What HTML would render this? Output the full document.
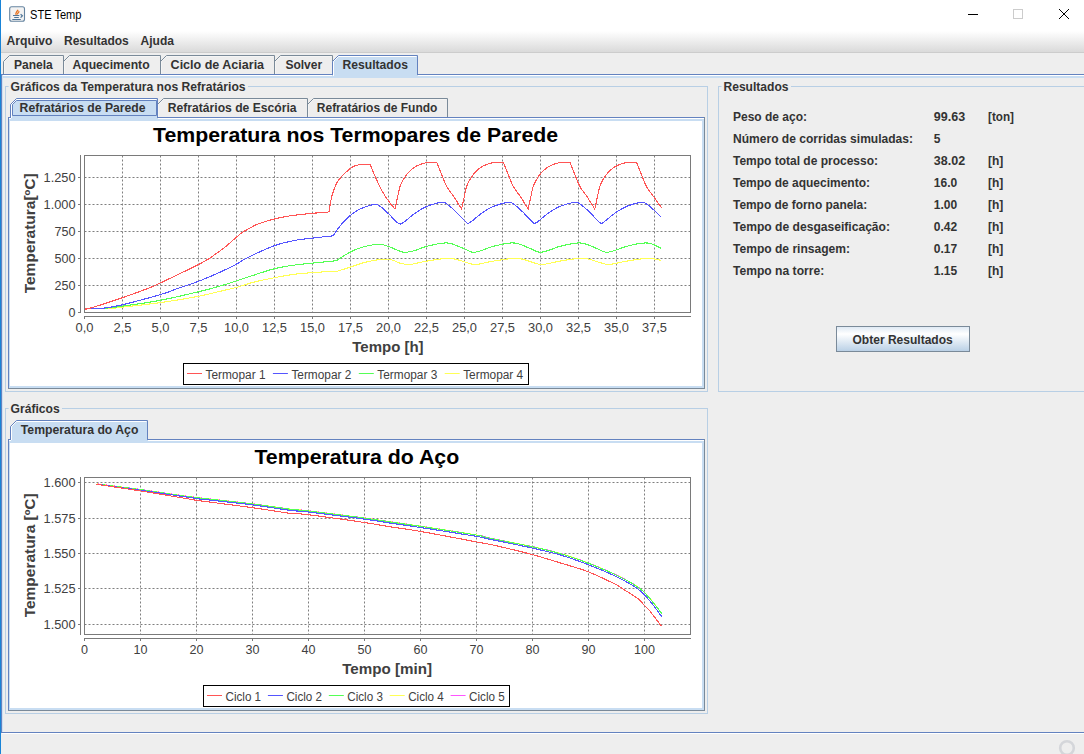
<!DOCTYPE html>
<html><head><meta charset="utf-8"><title>STE Temp</title>
<style>html,body{margin:0;padding:0;width:1084px;height:754px;overflow:hidden;background:#EEEEEE}svg{display:block}text{font-family:"Liberation Sans",sans-serif}</style>
</head><body><svg width="1084" height="754" viewBox="0 0 1084 754" font-family="Liberation Sans, sans-serif" shape-rendering="auto"><rect x="0" y="0" width="1084" height="754" fill="#EEEEEE" />
<rect x="0" y="0" width="1084" height="31" fill="#FFFFFF" />
<defs><linearGradient id="mg" x1="0" y1="0" x2="0" y2="1"><stop offset="0" stop-color="#FFFFFF"/><stop offset="1" stop-color="#DADADA"/></linearGradient><linearGradient id="btg" x1="0" y1="0" x2="0" y2="1"><stop offset="0" stop-color="#DDE8F3"/><stop offset="0.3" stop-color="#FFFFFF"/><stop offset="1" stop-color="#B8CFE5"/></linearGradient></defs>
<rect x="1" y="31" width="1083" height="21" fill="url(#mg)" />
<rect x="1" y="52" width="1083" height="1" fill="#CCCCCC" />
<rect x="9.7" y="6.7" width="14.8" height="14.6" rx="2" fill="#F3F3F3" stroke="#6584A0" stroke-width="1.1"/>
<path d="M13 15.5 h6.3 M14.2 17.5 h4.6 M12.3 19.5 h8.5" stroke="#4F7598" stroke-width="1.1" fill="none"/>
<path d="M20.6 14.3 l1.8 1.6 l-1.8 1.8" stroke="#4F7598" stroke-width="1.2" fill="none"/>
<path d="M16.2 14.8 c-1.2 -1.5 0.3 -3 2 -5 M17.3 14.6 c0 -1.4 1.2 -2 1.9 -3.4" stroke="#E9731F" stroke-width="1.3" fill="none"/>
<text x="30" y="19" font-size="12" fill="#000000" text-anchor="start" textLength="51.5" lengthAdjust="spacingAndGlyphs" >STE Temp</text>
<rect x="968" y="14" width="10" height="1" fill="#000000" />
<rect x="1013.5" y="9.5" width="9" height="9" fill="none" stroke="#CCCCCC"/>
<path d="M1059 9 L1069 19 M1069 9 L1059 19" fill="none" stroke="#000000" stroke-width="1" />
<text x="6.6" y="44.7" font-size="12" font-weight="bold" fill="#333333" text-anchor="start" textLength="45.9" lengthAdjust="spacingAndGlyphs" >Arquivo</text>
<text x="64.0" y="44.7" font-size="12" font-weight="bold" fill="#333333" text-anchor="start" textLength="64.8" lengthAdjust="spacingAndGlyphs" >Resultados</text>
<text x="140.6" y="44.7" font-size="12" font-weight="bold" fill="#333333" text-anchor="start" textLength="33.4" lengthAdjust="spacingAndGlyphs" >Ajuda</text>
<rect x="1" y="74" width="1083" height="1" fill="#6382BF" />
<rect x="2" y="75" width="1082" height="1" fill="#FFFFFF" />
<rect x="2" y="76" width="1082" height="2" fill="#C8DDF2" />
<rect x="1" y="74" width="1" height="659" fill="#6382BF" />
<rect x="2" y="75" width="1" height="657" fill="#CCDFF2" />
<rect x="1" y="732" width="1083" height="1" fill="#6382BF" />
<rect x="2" y="733" width="1082" height="1" fill="#FFFFFF" />
<path d="M4.5 74 V61.5 L9.5 56.5 H62.5" fill="none" stroke="#F5F5F5" stroke-width="1" />
<path d="M3.5 74 V61.5 L9.5 55.5 H63.5 V74" fill="none" stroke="#7A8A99" stroke-width="1" />
<text x="14.0" y="68.6" font-size="12" font-weight="bold" fill="#333333" text-anchor="start" textLength="38.8" lengthAdjust="spacingAndGlyphs" >Panela</text>
<path d="M64.5 74 V61.5 L69.5 56.5 H159.5" fill="none" stroke="#F5F5F5" stroke-width="1" />
<path d="M63.5 74 V61.5 L69.5 55.5 H160.5 V74" fill="none" stroke="#7A8A99" stroke-width="1" />
<text x="72.4" y="68.6" font-size="12" font-weight="bold" fill="#333333" text-anchor="start" textLength="77.2" lengthAdjust="spacingAndGlyphs" >Aquecimento</text>
<path d="M161.5 74 V61.5 L166.5 56.5 H273.5" fill="none" stroke="#F5F5F5" stroke-width="1" />
<path d="M160.5 74 V61.5 L166.5 55.5 H274.5 V74" fill="none" stroke="#7A8A99" stroke-width="1" />
<text x="170.6" y="68.6" font-size="12" font-weight="bold" fill="#333333" text-anchor="start" textLength="93.5" lengthAdjust="spacingAndGlyphs" >Ciclo de Aciaria</text>
<path d="M275.5 74 V61.5 L280.5 56.5 H331.5" fill="none" stroke="#F5F5F5" stroke-width="1" />
<path d="M274.5 74 V61.5 L280.5 55.5 H332.5 V74" fill="none" stroke="#7A8A99" stroke-width="1" />
<text x="285.4" y="68.6" font-size="12" font-weight="bold" fill="#333333" text-anchor="start" textLength="36.8" lengthAdjust="spacingAndGlyphs" >Solver</text>
<rect x="332" y="74" width="86" height="4" fill="#C8DDF2" />
<path d="M332.5 75 V61.5 L338.5 55.5 H417.5 V75 Z" fill="#C8DDF2" stroke="none"/>
<path d="M333.5 75 V61.5 L338.5 56.5 H416.5" fill="none" stroke="#FFFFFF" stroke-width="1" />
<path d="M332.5 75 V61.5 L338.5 55.5 H417.5 V75" fill="none" stroke="#6382BF" stroke-width="1" />
<text x="342.6" y="68.6" font-size="12" font-weight="bold" fill="#333333" text-anchor="start" textLength="65.3" lengthAdjust="spacingAndGlyphs" >Resultados</text>
<rect x="333" y="74" width="1" height="2" fill="#FFFFFF" />
<rect x="5" y="86" width="1" height="306" fill="#B8CFE5" />
<rect x="5" y="391" width="703" height="1" fill="#B8CFE5" />
<rect x="707" y="86" width="1" height="306" fill="#B8CFE5" />
<rect x="5" y="86" width="3.5999999999999996" height="1" fill="#B8CFE5" />
<rect x="248" y="86" width="460" height="1" fill="#B8CFE5" />
<text x="10.6" y="90.9" font-size="12" font-weight="bold" fill="#333333" text-anchor="start" textLength="235" lengthAdjust="spacingAndGlyphs" >Gráficos da Temperatura nos Refratários</text>
<rect x="5" y="408" width="1" height="306" fill="#B8CFE5" />
<rect x="5" y="713" width="703" height="1" fill="#B8CFE5" />
<rect x="707" y="408" width="1" height="306" fill="#B8CFE5" />
<rect x="5" y="408" width="3.5999999999999996" height="1" fill="#B8CFE5" />
<rect x="62" y="408" width="646" height="1" fill="#B8CFE5" />
<text x="10.6" y="412.7" font-size="12" font-weight="bold" fill="#333333" text-anchor="start" textLength="49" lengthAdjust="spacingAndGlyphs" >Gráficos</text>
<rect x="718" y="86" width="1" height="306" fill="#B8CFE5" />
<rect x="718" y="391" width="373" height="1" fill="#B8CFE5" />
<rect x="1090" y="86" width="1" height="306" fill="#B8CFE5" />
<rect x="718" y="86" width="3.5" height="1" fill="#B8CFE5" />
<rect x="791" y="86" width="300" height="1" fill="#B8CFE5" />
<text x="723.5" y="90.8" font-size="12" font-weight="bold" fill="#333333" text-anchor="start" textLength="65.0" lengthAdjust="spacingAndGlyphs" >Resultados</text>
<rect x="9" y="118" width="695" height="270" fill="#C8DDF2" />
<rect x="10" y="121" width="692" height="265" fill="#FFFFFF" />
<rect x="9" y="118" width="695" height="1" fill="#FFFFFF" />
<rect x="8" y="117" width="697" height="1" fill="#6382BF" />
<rect x="8" y="117" width="1" height="272" fill="#6382BF" />
<rect x="8" y="388" width="697" height="1" fill="#7A8A99" />
<rect x="704" y="117" width="1" height="272" fill="#7A8A99" />
<path d="M158.5 117 V104.5 L163.5 99.5 H306.5" fill="none" stroke="#F5F5F5" stroke-width="1" />
<path d="M157.5 117 V104.5 L163.5 98.5 H307.5 V117" fill="none" stroke="#7A8A99" stroke-width="1" />
<text x="167.8" y="111.6" font-size="12" font-weight="bold" fill="#333333" text-anchor="start" textLength="128.7" lengthAdjust="spacingAndGlyphs" >Refratários de Escória</text>
<path d="M308.5 117 V104.5 L313.5 99.5 H446.5" fill="none" stroke="#F5F5F5" stroke-width="1" />
<path d="M307.5 117 V104.5 L313.5 98.5 H447.5 V117" fill="none" stroke="#7A8A99" stroke-width="1" />
<text x="316.8" y="111.6" font-size="12" font-weight="bold" fill="#333333" text-anchor="start" textLength="120.6" lengthAdjust="spacingAndGlyphs" >Refratários de Fundo</text>
<rect x="11" y="117" width="147" height="4" fill="#C8DDF2" />
<path d="M10.5 118 V104.5 L16.5 98.5 H157.5 V118 Z" fill="#C8DDF2" stroke="none"/>
<path d="M11.5 118 V104.5 L16.5 99.5 H156.5" fill="none" stroke="#FFFFFF" stroke-width="1" />
<path d="M10.5 118 V104.5 L16.5 98.5 H157.5 V118" fill="none" stroke="#6382BF" stroke-width="1" />
<text x="19.6" y="111.6" font-size="12" font-weight="bold" fill="#333333" text-anchor="start" textLength="126.0" lengthAdjust="spacingAndGlyphs" >Refratários de Parede</text>
<path d="M12.5 115.5 V104.5 L16.5 100.5 H156.5 V115.5 Z" fill="none" stroke="#6382BF" stroke-width="1" />
<rect x="9" y="440" width="695" height="270" fill="#C8DDF2" />
<rect x="10" y="443" width="692" height="265" fill="#FFFFFF" />
<rect x="9" y="440" width="695" height="1" fill="#FFFFFF" />
<rect x="8" y="439" width="697" height="1" fill="#6382BF" />
<rect x="8" y="439" width="1" height="272" fill="#6382BF" />
<rect x="8" y="710" width="697" height="1" fill="#7A8A99" />
<rect x="704" y="439" width="1" height="272" fill="#7A8A99" />
<rect x="11" y="439" width="137" height="4" fill="#C8DDF2" />
<path d="M10.5 440 V426.5 L16.5 420.5 H147.5 V440 Z" fill="#C8DDF2" stroke="none"/>
<path d="M11.5 440 V426.5 L16.5 421.5 H146.5" fill="none" stroke="#FFFFFF" stroke-width="1" />
<path d="M10.5 440 V426.5 L16.5 420.5 H147.5 V440" fill="none" stroke="#6382BF" stroke-width="1" />
<text x="20.8" y="433.7" font-size="12" font-weight="bold" fill="#333333" text-anchor="start" textLength="117.6" lengthAdjust="spacingAndGlyphs" >Temperatura do Aço</text>
<rect x="10" y="121" width="692" height="265" fill="#FFFFFF" />
<text x="153.1" y="141.8" font-size="20" font-weight="bold" fill="#000000" text-anchor="start" textLength="405" lengthAdjust="spacingAndGlyphs" >Temperatura nos Termopares de Parede</text>
<line x1="84.5" y1="285.5" x2="690" y2="285.5" stroke="#7F7F7F" stroke-width="1" stroke-dasharray="2,2"/>
<line x1="84.5" y1="258.5" x2="690" y2="258.5" stroke="#7F7F7F" stroke-width="1" stroke-dasharray="2,2"/>
<line x1="84.5" y1="231.5" x2="690" y2="231.5" stroke="#7F7F7F" stroke-width="1" stroke-dasharray="2,2"/>
<line x1="84.5" y1="204.5" x2="690" y2="204.5" stroke="#7F7F7F" stroke-width="1" stroke-dasharray="2,2"/>
<line x1="84.5" y1="177.5" x2="690" y2="177.5" stroke="#7F7F7F" stroke-width="1" stroke-dasharray="2,2"/>
<line x1="122.5" y1="155.5" x2="122.5" y2="312" stroke="#7F7F7F" stroke-width="1" stroke-dasharray="2,2"/>
<line x1="160.5" y1="155.5" x2="160.5" y2="312" stroke="#7F7F7F" stroke-width="1" stroke-dasharray="2,2"/>
<line x1="198.5" y1="155.5" x2="198.5" y2="312" stroke="#7F7F7F" stroke-width="1" stroke-dasharray="2,2"/>
<line x1="236.5" y1="155.5" x2="236.5" y2="312" stroke="#7F7F7F" stroke-width="1" stroke-dasharray="2,2"/>
<line x1="274.5" y1="155.5" x2="274.5" y2="312" stroke="#7F7F7F" stroke-width="1" stroke-dasharray="2,2"/>
<line x1="312.5" y1="155.5" x2="312.5" y2="312" stroke="#7F7F7F" stroke-width="1" stroke-dasharray="2,2"/>
<line x1="350.5" y1="155.5" x2="350.5" y2="312" stroke="#7F7F7F" stroke-width="1" stroke-dasharray="2,2"/>
<line x1="388.5" y1="155.5" x2="388.5" y2="312" stroke="#7F7F7F" stroke-width="1" stroke-dasharray="2,2"/>
<line x1="426.5" y1="155.5" x2="426.5" y2="312" stroke="#7F7F7F" stroke-width="1" stroke-dasharray="2,2"/>
<line x1="464.5" y1="155.5" x2="464.5" y2="312" stroke="#7F7F7F" stroke-width="1" stroke-dasharray="2,2"/>
<line x1="502.5" y1="155.5" x2="502.5" y2="312" stroke="#7F7F7F" stroke-width="1" stroke-dasharray="2,2"/>
<line x1="540.5" y1="155.5" x2="540.5" y2="312" stroke="#7F7F7F" stroke-width="1" stroke-dasharray="2,2"/>
<line x1="578.5" y1="155.5" x2="578.5" y2="312" stroke="#7F7F7F" stroke-width="1" stroke-dasharray="2,2"/>
<line x1="616.5" y1="155.5" x2="616.5" y2="312" stroke="#7F7F7F" stroke-width="1" stroke-dasharray="2,2"/>
<line x1="654.5" y1="155.5" x2="654.5" y2="312" stroke="#7F7F7F" stroke-width="1" stroke-dasharray="2,2"/>
<rect x="84.5" y="155.5" width="606" height="157" fill="none" stroke="#7A7A7A"/>
<rect x="80" y="155" width="1" height="158" fill="#7A7A7A" />
<rect x="84" y="316" width="607" height="1" fill="#7A7A7A" />
<rect x="78" y="312" width="2" height="1" fill="#7A7A7A" />
<text x="75.6" y="316.8" font-size="12" fill="#404040" text-anchor="end" textLength="7" lengthAdjust="spacingAndGlyphs" >0</text>
<rect x="78" y="285" width="2" height="1" fill="#7A7A7A" />
<text x="75.6" y="289.7" font-size="12" fill="#404040" text-anchor="end" textLength="21" lengthAdjust="spacingAndGlyphs" >250</text>
<rect x="78" y="258" width="2" height="1" fill="#7A7A7A" />
<text x="75.6" y="262.7" font-size="12" fill="#404040" text-anchor="end" textLength="21" lengthAdjust="spacingAndGlyphs" >500</text>
<rect x="78" y="231" width="2" height="1" fill="#7A7A7A" />
<text x="75.6" y="235.70000000000002" font-size="12" fill="#404040" text-anchor="end" textLength="21" lengthAdjust="spacingAndGlyphs" >750</text>
<rect x="78" y="204" width="2" height="1" fill="#7A7A7A" />
<text x="75.6" y="208.70000000000002" font-size="12" fill="#404040" text-anchor="end" textLength="32" lengthAdjust="spacingAndGlyphs" >1.000</text>
<rect x="78" y="177" width="2" height="1" fill="#7A7A7A" />
<text x="75.6" y="181.70000000000002" font-size="12" fill="#404040" text-anchor="end" textLength="32" lengthAdjust="spacingAndGlyphs" >1.250</text>
<rect x="84" y="317" width="1" height="2" fill="#7A7A7A" />
<text x="84.5" y="332" font-size="12" fill="#404040" text-anchor="middle" textLength="18" lengthAdjust="spacingAndGlyphs" >0,0</text>
<rect x="122" y="317" width="1" height="2" fill="#7A7A7A" />
<text x="122.5" y="332" font-size="12" fill="#404040" text-anchor="middle" textLength="18" lengthAdjust="spacingAndGlyphs" >2,5</text>
<rect x="160" y="317" width="1" height="2" fill="#7A7A7A" />
<text x="160.5" y="332" font-size="12" fill="#404040" text-anchor="middle" textLength="18" lengthAdjust="spacingAndGlyphs" >5,0</text>
<rect x="198" y="317" width="1" height="2" fill="#7A7A7A" />
<text x="198.5" y="332" font-size="12" fill="#404040" text-anchor="middle" textLength="18" lengthAdjust="spacingAndGlyphs" >7,5</text>
<rect x="236" y="317" width="1" height="2" fill="#7A7A7A" />
<text x="236.5" y="332" font-size="12" fill="#404040" text-anchor="middle" textLength="25" lengthAdjust="spacingAndGlyphs" >10,0</text>
<rect x="274" y="317" width="1" height="2" fill="#7A7A7A" />
<text x="274.5" y="332" font-size="12" fill="#404040" text-anchor="middle" textLength="25" lengthAdjust="spacingAndGlyphs" >12,5</text>
<rect x="312" y="317" width="1" height="2" fill="#7A7A7A" />
<text x="312.5" y="332" font-size="12" fill="#404040" text-anchor="middle" textLength="25" lengthAdjust="spacingAndGlyphs" >15,0</text>
<rect x="350" y="317" width="1" height="2" fill="#7A7A7A" />
<text x="350.5" y="332" font-size="12" fill="#404040" text-anchor="middle" textLength="25" lengthAdjust="spacingAndGlyphs" >17,5</text>
<rect x="388" y="317" width="1" height="2" fill="#7A7A7A" />
<text x="388.5" y="332" font-size="12" fill="#404040" text-anchor="middle" textLength="25" lengthAdjust="spacingAndGlyphs" >20,0</text>
<rect x="426" y="317" width="1" height="2" fill="#7A7A7A" />
<text x="426.5" y="332" font-size="12" fill="#404040" text-anchor="middle" textLength="25" lengthAdjust="spacingAndGlyphs" >22,5</text>
<rect x="464" y="317" width="1" height="2" fill="#7A7A7A" />
<text x="464.5" y="332" font-size="12" fill="#404040" text-anchor="middle" textLength="25" lengthAdjust="spacingAndGlyphs" >25,0</text>
<rect x="502" y="317" width="1" height="2" fill="#7A7A7A" />
<text x="502.5" y="332" font-size="12" fill="#404040" text-anchor="middle" textLength="25" lengthAdjust="spacingAndGlyphs" >27,5</text>
<rect x="540" y="317" width="1" height="2" fill="#7A7A7A" />
<text x="540.5" y="332" font-size="12" fill="#404040" text-anchor="middle" textLength="25" lengthAdjust="spacingAndGlyphs" >30,0</text>
<rect x="578" y="317" width="1" height="2" fill="#7A7A7A" />
<text x="578.5" y="332" font-size="12" fill="#404040" text-anchor="middle" textLength="25" lengthAdjust="spacingAndGlyphs" >32,5</text>
<rect x="616" y="317" width="1" height="2" fill="#7A7A7A" />
<text x="616.5" y="332" font-size="12" fill="#404040" text-anchor="middle" textLength="25" lengthAdjust="spacingAndGlyphs" >35,0</text>
<rect x="654" y="317" width="1" height="2" fill="#7A7A7A" />
<text x="654.5" y="332" font-size="12" fill="#404040" text-anchor="middle" textLength="25" lengthAdjust="spacingAndGlyphs" >37,5</text>
<text x="0" y="0" font-size="14" font-weight="bold" fill="#404040" text-anchor="middle" textLength="120" lengthAdjust="spacingAndGlyphs" transform="translate(35.2 233.35) rotate(-90)">Temperatura[ºC]</text>
<text x="352.3" y="352" font-size="14" font-weight="bold" fill="#404040" text-anchor="start" textLength="71.3" lengthAdjust="spacingAndGlyphs" >Tempo [h]</text>
<rect x="183.5" y="363.5" width="345" height="21" fill="#FFFFFF" stroke="#000000"/>
<rect x="187.0" y="373" width="15.0" height="1" fill="#FF5555" />
<text x="205.5" y="378.8" font-size="12" fill="#404040" text-anchor="start" textLength="60" lengthAdjust="spacingAndGlyphs" >Termopar 1</text>
<rect x="272.9" y="373" width="15.0" height="1" fill="#5555FF" />
<text x="291.4" y="378.8" font-size="12" fill="#404040" text-anchor="start" textLength="60" lengthAdjust="spacingAndGlyphs" >Termopar 2</text>
<rect x="358.8" y="373" width="15.0" height="1" fill="#55FF55" />
<text x="377.3" y="378.8" font-size="12" fill="#404040" text-anchor="start" textLength="60" lengthAdjust="spacingAndGlyphs" >Termopar 3</text>
<rect x="444.70000000000005" y="373" width="15.0" height="1" fill="#FFFF55" />
<text x="463.20000000000005" y="378.8" font-size="12" fill="#404040" text-anchor="start" textLength="60" lengthAdjust="spacingAndGlyphs" >Termopar 4</text>
<defs><clipPath id="pc1"><rect x="85" y="156" width="605" height="156"/></clipPath><clipPath id="pc2"><rect x="85" y="478" width="605" height="156"/></clipPath></defs>
<g clip-path="url(#pc1)">
<polyline points="84.60,308.50 110.80,308.50 111.74,308.40 112.80,308.29 114.17,308.14 116.08,307.93 118.72,307.62 122.30,307.20 127.10,306.64 133.00,305.97 139.63,305.21 146.64,304.38 153.65,303.50 160.30,302.60 166.85,301.63 173.64,300.58 180.43,299.48 187.00,298.37 193.10,297.29 198.50,296.30 203.11,295.38 207.09,294.50 210.61,293.65 213.82,292.84 216.90,292.05 220.00,291.30 223.03,290.60 225.83,289.97 228.50,289.37 231.11,288.76 233.75,288.12 236.50,287.40 239.32,286.59 242.15,285.70 245.00,284.78 247.91,283.85 250.90,282.95 254.00,282.10 257.26,281.30 260.66,280.53 264.15,279.77 267.66,279.05 271.13,278.36 274.50,277.70 277.77,277.07 280.98,276.46 284.15,275.89 287.30,275.35 290.44,274.85 293.60,274.40 296.69,274.01 299.68,273.68 302.67,273.39 305.74,273.12 308.99,272.87 312.50,272.60 316.63,272.32 321.37,272.02 326.28,271.74 330.93,271.48 334.89,271.26 337.70,271.10 339.06,270.67 340.93,270.09 343.15,269.39 345.57,268.63 348.04,267.85 350.40,267.10 352.67,266.34 354.96,265.53 357.30,264.70 359.71,263.88 362.20,263.10 364.80,262.40 367.63,261.73 370.70,261.07 373.86,260.46 376.94,259.91 379.81,259.48 382.30,259.20 384.36,259.08 386.11,259.09 387.63,259.21 389.03,259.41 390.38,259.69 391.80,260.00 393.22,260.40 394.56,260.93 395.87,261.52 397.18,262.11 398.54,262.66 400.00,263.10 401.49,263.47 402.97,263.83 404.50,264.14 406.14,264.37 407.95,264.46 410.00,264.40 412.30,264.12 414.80,263.65 417.48,263.06 420.30,262.40 423.21,261.76 426.20,261.20 429.42,260.67 432.94,260.10 436.56,259.55 440.09,259.05 443.34,258.65 446.10,258.40 448.26,258.29 449.95,258.29 451.35,258.38 452.65,258.57 454.04,258.85 455.70,259.20 457.69,259.70 459.87,260.37 462.14,261.12 464.39,261.88 466.51,262.56 468.40,263.10 469.93,263.52 471.17,263.89 472.28,264.19 473.44,264.40 474.82,264.47 476.60,264.40 478.79,264.12 481.27,263.65 483.97,263.06 486.83,262.40 489.79,261.76 492.80,261.20 496.02,260.67 499.54,260.10 503.16,259.55 506.69,259.05 509.94,258.65 512.70,258.40 514.86,258.29 516.55,258.29 517.95,258.38 519.25,258.57 520.64,258.85 522.30,259.20 524.29,259.70 526.47,260.37 528.74,261.12 530.99,261.88 533.11,262.56 535.00,263.10 536.53,263.52 537.77,263.89 538.88,264.19 540.04,264.40 541.42,264.47 543.20,264.40 545.39,264.12 547.87,263.65 550.57,263.06 553.43,262.40 556.39,261.76 559.40,261.20 562.62,260.67 566.14,260.10 569.76,259.55 573.29,259.05 576.54,258.65 579.30,258.40 581.46,258.29 583.15,258.29 584.55,258.38 585.85,258.57 587.24,258.85 588.90,259.20 590.89,259.70 593.07,260.37 595.34,261.12 597.59,261.88 599.71,262.56 601.60,263.10 603.13,263.52 604.37,263.89 605.48,264.19 606.64,264.40 608.02,264.47 609.80,264.40 611.99,264.12 614.47,263.65 617.17,263.06 620.03,262.40 622.99,261.76 626.00,261.20 629.22,260.67 632.74,260.10 636.36,259.55 639.89,259.05 643.14,258.65 645.90,258.40 648.14,258.32 650.00,258.38 651.58,258.54 652.96,258.76 654.23,259.00 655.50,259.20 656.77,259.40 657.96,259.64 659.05,259.90 660.01,260.14 660.80,260.35 661.40,260.50" fill="none" stroke="#FFFF55" stroke-width="1.1" stroke-linejoin="round" shape-rendering="crispEdges"/>
<polyline points="84.60,308.50 103.00,308.50 104.88,308.29 107.31,308.04 110.28,307.72 113.77,307.32 117.78,306.82 122.30,306.20 127.55,305.46 133.57,304.60 140.12,303.64 146.93,302.60 153.74,301.48 160.30,300.30 166.80,299.00 173.48,297.57 180.16,296.06 186.68,294.54 192.85,293.07 198.50,291.70 203.52,290.47 208.02,289.33 212.18,288.24 216.17,287.15 220.15,286.02 224.30,284.80 228.60,283.48 232.92,282.09 237.24,280.65 241.53,279.20 245.79,277.78 250.00,276.40 254.19,275.03 258.37,273.63 262.52,272.26 266.60,270.94 270.57,269.74 274.40,268.70 278.09,267.83 281.66,267.10 285.13,266.49 288.50,265.95 291.79,265.47 295.00,265.00 298.03,264.58 300.84,264.25 303.56,263.96 306.33,263.70 309.27,263.42 312.50,263.10 316.35,262.71 320.79,262.28 325.39,261.83 329.76,261.41 333.46,261.05 336.10,260.80 337.65,259.80 339.80,258.40 342.35,256.74 345.10,255.01 347.85,253.38 350.40,252.00 352.80,250.85 355.20,249.80 357.60,248.83 360.00,247.96 362.40,247.18 364.80,246.50 367.24,245.90 369.75,245.39 372.26,244.98 374.69,244.66 377.00,244.47 379.10,244.40 380.94,244.48 382.55,244.69 384.03,245.03 385.47,245.45 386.96,245.95 388.60,246.50 390.45,247.18 392.46,248.01 394.52,248.92 396.53,249.81 398.39,250.60 400.00,251.20 401.28,251.61 402.30,251.90 403.18,252.09 404.01,252.20 404.91,252.23 406.00,252.20 407.25,252.11 408.56,251.95 409.95,251.72 411.41,251.41 412.96,251.04 414.60,250.60 416.32,250.05 418.11,249.39 419.99,248.65 421.96,247.89 424.02,247.16 426.20,246.50 428.59,245.87 431.21,245.24 433.93,244.63 436.62,244.07 439.15,243.62 441.40,243.30 443.27,243.09 444.84,242.96 446.26,242.93 447.65,243.01 449.15,243.23 450.90,243.60 452.98,244.20 455.30,245.04 457.73,246.01 460.14,247.02 462.41,247.98 464.40,248.80 466.07,249.53 467.51,250.25 468.81,250.93 470.03,251.50 471.27,251.94 472.60,252.20 473.98,252.25 475.33,252.13 476.69,251.87 478.10,251.50 479.59,251.07 481.20,250.60 482.92,250.05 484.71,249.39 486.59,248.65 488.56,247.89 490.62,247.16 492.80,246.50 495.19,245.87 497.81,245.24 500.53,244.63 503.22,244.07 505.75,243.62 508.00,243.30 509.87,243.09 511.44,242.96 512.86,242.93 514.25,243.01 515.75,243.23 517.50,243.60 519.58,244.20 521.90,245.04 524.33,246.01 526.74,247.02 529.01,247.98 531.00,248.80 532.67,249.53 534.11,250.25 535.41,250.93 536.63,251.50 537.87,251.94 539.20,252.20 540.58,252.25 541.93,252.13 543.29,251.87 544.70,251.50 546.19,251.07 547.80,250.60 549.52,250.05 551.31,249.39 553.19,248.65 555.16,247.89 557.22,247.16 559.40,246.50 561.79,245.87 564.41,245.24 567.13,244.63 569.82,244.07 572.35,243.62 574.60,243.30 576.47,243.09 578.04,242.96 579.46,242.93 580.85,243.01 582.35,243.23 584.10,243.60 586.18,244.20 588.50,245.04 590.93,246.01 593.34,247.02 595.61,247.98 597.60,248.80 599.27,249.53 600.71,250.25 602.01,250.93 603.23,251.50 604.47,251.94 605.80,252.20 607.18,252.25 608.53,252.13 609.89,251.87 611.30,251.50 612.79,251.07 614.40,250.60 616.12,250.05 617.91,249.39 619.79,248.65 621.76,247.89 623.82,247.16 626.00,246.50 628.39,245.87 631.01,245.24 633.73,244.63 636.42,244.07 638.95,243.62 641.20,243.30 643.10,243.10 644.74,242.97 646.23,242.95 647.66,243.04 649.11,243.25 650.70,243.60 652.54,244.20 654.57,245.04 656.64,246.02 658.58,246.99 660.22,247.83 661.40,248.40" fill="none" stroke="#55FF55" stroke-width="1.1" stroke-linejoin="round" shape-rendering="crispEdges"/>
<polyline points="84.60,308.50 101.50,308.50 103.56,308.17 106.26,307.78 109.53,307.29 113.32,306.65 117.60,305.84 122.30,304.80 127.87,303.43 134.45,301.73 141.50,299.86 148.51,297.94 154.95,296.14 160.30,294.60 164.38,293.35 167.57,292.27 170.19,291.31 172.57,290.39 175.03,289.44 177.90,288.40 181.15,287.29 184.51,286.17 187.96,285.03 191.46,283.85 194.98,282.61 198.50,281.30 202.09,279.89 205.79,278.38 209.51,276.81 213.17,275.23 216.70,273.68 220.00,272.20 223.09,270.78 226.03,269.39 228.84,268.02 231.51,266.68 234.06,265.37 236.50,264.10 238.61,262.92 240.35,261.85 241.97,260.81 243.71,259.72 245.84,258.51 248.60,257.10 252.17,255.38 256.38,253.40 260.97,251.29 265.68,249.21 270.24,247.30 274.40,245.70 278.17,244.43 281.77,243.37 285.22,242.48 288.56,241.72 291.81,241.04 295.00,240.40 298.06,239.84 300.95,239.41 303.76,239.06 306.56,238.76 309.45,238.45 312.50,238.10 315.98,237.69 319.87,237.25 323.84,236.81 327.57,236.40 330.73,236.05 333.00,235.80 333.84,234.61 334.99,232.96 336.36,231.00 337.86,228.91 339.40,226.86 340.90,225.00 342.37,223.30 343.89,221.62 345.44,219.97 347.05,218.37 348.70,216.84 350.40,215.40 352.15,214.03 353.95,212.72 355.80,211.48 357.69,210.32 359.63,209.26 361.60,208.30 363.70,207.42 365.96,206.60 368.25,205.88 370.48,205.28 372.53,204.84 374.30,204.60 375.71,204.56 376.84,204.69 377.80,204.97 378.69,205.41 379.62,205.99 380.70,206.70 381.91,207.57 383.16,208.61 384.45,209.80 385.79,211.09 387.17,212.43 388.60,213.80 390.15,215.34 391.84,217.10 393.58,218.93 395.28,220.64 396.85,222.09 398.20,223.10 399.23,223.68 399.98,223.97 400.61,223.98 401.25,223.74 402.07,223.28 403.20,222.60 404.69,221.59 406.42,220.22 408.32,218.61 410.31,216.91 412.33,215.26 414.30,213.80 416.21,212.49 418.11,211.20 420.04,209.97 422.02,208.80 424.06,207.70 426.20,206.70 428.56,205.76 431.14,204.86 433.80,204.04 436.37,203.33 438.69,202.77 440.60,202.40 441.98,202.19 442.94,202.11 443.65,202.18 444.29,202.42 445.05,202.85 446.10,203.50 447.45,204.40 448.97,205.56 450.60,206.91 452.30,208.39 454.01,209.94 455.70,211.50 457.45,213.23 459.32,215.21 461.21,217.27 463.02,219.22 464.65,220.89 466.00,222.10 466.93,222.88 467.48,223.36 467.85,223.56 468.23,223.50 468.82,223.17 469.80,222.60 471.22,221.65 472.93,220.29 474.84,218.68 476.87,216.95 478.92,215.28 480.90,213.80 482.81,212.49 484.71,211.20 486.64,209.97 488.62,208.80 490.66,207.70 492.80,206.70 495.16,205.76 497.74,204.86 500.40,204.04 502.97,203.33 505.29,202.77 507.20,202.40 508.58,202.19 509.54,202.11 510.25,202.18 510.89,202.42 511.65,202.85 512.70,203.50 514.05,204.40 515.57,205.56 517.20,206.91 518.90,208.39 520.61,209.94 522.30,211.50 524.05,213.23 525.92,215.21 527.81,217.27 529.62,219.22 531.25,220.89 532.60,222.10 533.52,222.88 534.08,223.36 534.45,223.56 534.83,223.50 535.42,223.17 536.40,222.60 537.82,221.65 539.53,220.29 541.44,218.68 543.47,216.95 545.52,215.28 547.50,213.80 549.41,212.49 551.31,211.20 553.24,209.97 555.22,208.80 557.26,207.70 559.40,206.70 561.76,205.76 564.34,204.86 567.00,204.04 569.57,203.33 571.89,202.77 573.80,202.40 575.18,202.19 576.14,202.11 576.85,202.18 577.49,202.42 578.25,202.85 579.30,203.50 580.65,204.40 582.17,205.56 583.80,206.91 585.50,208.39 587.21,209.94 588.90,211.50 590.65,213.23 592.52,215.21 594.41,217.27 596.22,219.22 597.85,220.89 599.20,222.10 600.12,222.88 600.68,223.36 601.05,223.56 601.43,223.50 602.02,223.17 603.00,222.60 604.42,221.65 606.13,220.29 608.04,218.68 610.07,216.95 612.12,215.28 614.10,213.80 616.01,212.49 617.91,211.20 619.84,209.97 621.82,208.80 623.86,207.70 626.00,206.70 628.36,205.76 630.94,204.86 633.60,204.04 636.17,203.33 638.49,202.77 640.40,202.40 641.78,202.19 642.74,202.11 643.45,202.18 644.09,202.42 644.85,202.85 645.90,203.50 647.31,204.46 648.93,205.73 650.67,207.19 652.42,208.72 654.07,210.20 655.50,211.50 656.77,212.70 657.96,213.90 659.05,215.05 660.01,216.09 660.80,216.96 661.40,217.60" fill="none" stroke="#5555FF" stroke-width="1.1" stroke-linejoin="round" shape-rendering="crispEdges"/>
<polyline points="84.60,308.40 84.88,308.50 85.00,308.73 85.28,308.96 86.01,309.04 87.48,308.83 90.00,308.20 93.88,307.04 98.94,305.45 104.76,303.57 110.88,301.55 116.87,299.55 122.30,297.70 127.38,295.93 132.51,294.10 137.52,292.29 142.22,290.55 146.44,288.97 150.00,287.60 152.65,286.55 154.49,285.77 155.84,285.14 157.05,284.53 158.46,283.83 160.40,282.90 162.87,281.75 165.59,280.47 168.51,279.09 171.57,277.63 174.72,276.13 177.90,274.60 181.27,272.98 184.90,271.22 188.61,269.42 192.24,267.64 195.59,265.98 198.50,264.50 200.83,263.29 202.70,262.31 204.31,261.44 205.83,260.56 207.46,259.55 209.40,258.30 211.68,256.77 214.17,255.06 216.77,253.22 219.39,251.32 221.93,249.42 224.30,247.60 226.57,245.77 228.81,243.87 230.98,241.97 233.02,240.16 234.88,238.51 236.50,237.10 237.80,235.98 238.82,235.10 239.66,234.38 240.41,233.75 241.19,233.15 242.10,232.50 243.10,231.84 244.10,231.24 245.12,230.66 246.19,230.07 247.34,229.46 248.60,228.80 249.90,228.08 251.23,227.32 252.62,226.54 254.16,225.73 255.90,224.92 257.90,224.10 260.24,223.25 262.89,222.36 265.73,221.46 268.67,220.57 271.60,219.74 274.40,219.00 277.02,218.35 279.54,217.77 282.05,217.24 284.63,216.74 287.39,216.27 290.40,215.80 293.81,215.33 297.58,214.87 301.51,214.43 305.43,214.01 309.16,213.63 312.50,213.30 315.56,213.03 318.51,212.83 321.27,212.66 323.74,212.50 325.85,212.33 327.50,212.10 328.58,211.80 329.14,211.45 329.34,211.07 329.32,210.72 329.26,210.41 329.30,210.20 329.53,208.78 329.86,206.76 330.25,204.39 330.66,201.95 331.05,199.70 331.40,197.90 331.68,196.62 331.91,195.66 332.14,194.88 332.37,194.17 332.65,193.38 333.00,192.40 333.41,191.20 333.86,189.89 334.35,188.50 334.89,187.09 335.47,185.71 336.10,184.40 336.75,183.18 337.40,182.03 338.10,180.90 338.89,179.76 339.81,178.57 340.90,177.30 342.23,175.87 343.77,174.30 345.45,172.68 347.17,171.11 348.85,169.69 350.40,168.50 351.77,167.57 353.03,166.81 354.25,166.19 355.50,165.69 356.86,165.27 358.40,164.90 360.30,164.61 362.52,164.43 364.85,164.32 367.07,164.27 368.96,164.24 370.30,164.20 370.50,164.80 370.71,165.54 371.00,166.46 371.40,167.62 371.95,169.08 372.70,170.90 373.71,173.25 374.96,176.11 376.36,179.28 377.83,182.52 379.31,185.64 380.70,188.40 382.04,190.85 383.40,193.16 384.75,195.34 386.08,197.39 387.37,199.31 388.60,201.10 389.83,202.80 391.08,204.41 392.29,205.89 393.40,207.20 394.32,208.28 395.00,209.10 395.25,207.90 395.60,206.25 396.01,204.29 396.46,202.16 396.93,199.98 397.40,197.90 397.84,195.84 398.28,193.69 398.73,191.49 399.23,189.31 399.81,187.20 400.50,185.20 401.32,183.30 402.24,181.44 403.25,179.66 404.30,177.96 405.36,176.36 406.40,174.90 407.43,173.58 408.47,172.37 409.52,171.28 410.58,170.28 411.64,169.36 412.70,168.50 413.74,167.72 414.77,167.04 415.80,166.44 416.85,165.90 417.95,165.39 419.10,164.90 420.31,164.42 421.56,163.97 422.85,163.55 424.19,163.18 425.57,162.86 427.00,162.60 428.61,162.42 430.43,162.31 432.29,162.26 434.05,162.23 435.54,162.22 436.60,162.20 437.21,163.70 438.05,165.79 439.05,168.26 440.11,170.88 441.16,173.43 442.10,175.70 442.91,177.70 443.66,179.61 444.39,181.45 445.15,183.25 445.97,185.02 446.90,186.80 447.96,188.54 449.11,190.23 450.33,191.89 451.59,193.57 452.85,195.29 454.10,197.10 455.42,199.14 456.86,201.42 458.30,203.74 459.64,205.93 460.78,207.77 461.60,209.10 461.85,207.90 462.20,206.25 462.61,204.29 463.06,202.16 463.53,199.98 464.00,197.90 464.44,195.84 464.88,193.69 465.33,191.49 465.83,189.31 466.41,187.20 467.10,185.20 467.92,183.30 468.84,181.44 469.85,179.66 470.90,177.96 471.96,176.36 473.00,174.90 474.03,173.58 475.07,172.37 476.12,171.28 477.18,170.28 478.24,169.36 479.30,168.50 480.34,167.72 481.37,167.04 482.40,166.44 483.45,165.90 484.55,165.39 485.70,164.90 486.91,164.42 488.16,163.97 489.45,163.55 490.79,163.18 492.17,162.86 493.60,162.60 495.21,162.42 497.03,162.31 498.89,162.26 500.65,162.23 502.14,162.22 503.20,162.20 503.81,163.70 504.65,165.79 505.65,168.26 506.71,170.88 507.76,173.43 508.70,175.70 509.51,177.70 510.26,179.61 510.99,181.45 511.75,183.25 512.57,185.02 513.50,186.80 514.56,188.54 515.71,190.23 516.93,191.89 518.19,193.57 519.45,195.29 520.70,197.10 522.02,199.14 523.46,201.42 524.90,203.74 526.24,205.93 527.38,207.77 528.20,209.10 528.45,207.90 528.80,206.25 529.21,204.29 529.66,202.16 530.13,199.98 530.60,197.90 531.04,195.84 531.48,193.69 531.93,191.49 532.43,189.31 533.01,187.20 533.70,185.20 534.52,183.30 535.44,181.44 536.45,179.66 537.50,177.96 538.56,176.36 539.60,174.90 540.63,173.58 541.67,172.37 542.72,171.28 543.78,170.28 544.84,169.36 545.90,168.50 546.94,167.72 547.97,167.04 549.00,166.44 550.05,165.90 551.15,165.39 552.30,164.90 553.51,164.42 554.76,163.97 556.05,163.55 557.39,163.18 558.77,162.86 560.20,162.60 561.81,162.42 563.63,162.31 565.49,162.26 567.25,162.23 568.74,162.22 569.80,162.20 570.41,163.70 571.25,165.79 572.25,168.26 573.31,170.88 574.36,173.43 575.30,175.70 576.11,177.70 576.86,179.61 577.59,181.45 578.35,183.25 579.17,185.02 580.10,186.80 581.16,188.54 582.31,190.23 583.53,191.89 584.79,193.57 586.05,195.29 587.30,197.10 588.62,199.14 590.06,201.42 591.50,203.74 592.84,205.93 593.98,207.77 594.80,209.10 595.05,207.90 595.40,206.25 595.81,204.29 596.26,202.16 596.73,199.98 597.20,197.90 597.64,195.84 598.08,193.69 598.53,191.49 599.03,189.31 599.61,187.20 600.30,185.20 601.12,183.30 602.04,181.44 603.05,179.66 604.10,177.96 605.16,176.36 606.20,174.90 607.23,173.58 608.27,172.37 609.32,171.28 610.38,170.28 611.44,169.36 612.50,168.50 613.54,167.72 614.57,167.04 615.60,166.44 616.65,165.90 617.75,165.39 618.90,164.90 620.11,164.42 621.36,163.97 622.65,163.55 623.99,163.18 625.37,162.86 626.80,162.60 628.41,162.42 630.23,162.31 632.09,162.26 633.85,162.23 635.34,162.22 636.40,162.20 637.01,163.70 637.85,165.79 638.85,168.26 639.91,170.88 640.96,173.43 641.90,175.70 642.71,177.70 643.46,179.61 644.19,181.45 644.95,183.25 645.77,185.02 646.70,186.80 647.76,188.56 648.91,190.28 650.13,191.98 651.39,193.67 652.65,195.38 653.90,197.10 655.22,198.97 656.66,201.00 658.10,203.04 659.44,204.94 660.58,206.54 661.40,207.70" fill="none" stroke="#FF5555" stroke-width="1.1" stroke-linejoin="round" shape-rendering="crispEdges"/>
</g>
<rect x="10" y="443" width="692" height="265" fill="#FFFFFF" />
<text x="254.4" y="463.8" font-size="20" font-weight="bold" fill="#000000" text-anchor="start" textLength="204.8" lengthAdjust="spacingAndGlyphs" >Temperatura do Aço</text>
<line x1="84.5" y1="624.5" x2="690" y2="624.5" stroke="#7F7F7F" stroke-width="1" stroke-dasharray="2,2"/>
<line x1="84.5" y1="588.5" x2="690" y2="588.5" stroke="#7F7F7F" stroke-width="1" stroke-dasharray="2,2"/>
<line x1="84.5" y1="553.5" x2="690" y2="553.5" stroke="#7F7F7F" stroke-width="1" stroke-dasharray="2,2"/>
<line x1="84.5" y1="518.5" x2="690" y2="518.5" stroke="#7F7F7F" stroke-width="1" stroke-dasharray="2,2"/>
<line x1="84.5" y1="482.5" x2="690" y2="482.5" stroke="#7F7F7F" stroke-width="1" stroke-dasharray="2,2"/>
<line x1="140.5" y1="477.5" x2="140.5" y2="634" stroke="#7F7F7F" stroke-width="1" stroke-dasharray="2,2"/>
<line x1="196.5" y1="477.5" x2="196.5" y2="634" stroke="#7F7F7F" stroke-width="1" stroke-dasharray="2,2"/>
<line x1="252.5" y1="477.5" x2="252.5" y2="634" stroke="#7F7F7F" stroke-width="1" stroke-dasharray="2,2"/>
<line x1="308.5" y1="477.5" x2="308.5" y2="634" stroke="#7F7F7F" stroke-width="1" stroke-dasharray="2,2"/>
<line x1="364.5" y1="477.5" x2="364.5" y2="634" stroke="#7F7F7F" stroke-width="1" stroke-dasharray="2,2"/>
<line x1="420.5" y1="477.5" x2="420.5" y2="634" stroke="#7F7F7F" stroke-width="1" stroke-dasharray="2,2"/>
<line x1="476.5" y1="477.5" x2="476.5" y2="634" stroke="#7F7F7F" stroke-width="1" stroke-dasharray="2,2"/>
<line x1="532.5" y1="477.5" x2="532.5" y2="634" stroke="#7F7F7F" stroke-width="1" stroke-dasharray="2,2"/>
<line x1="588.5" y1="477.5" x2="588.5" y2="634" stroke="#7F7F7F" stroke-width="1" stroke-dasharray="2,2"/>
<line x1="644.5" y1="477.5" x2="644.5" y2="634" stroke="#7F7F7F" stroke-width="1" stroke-dasharray="2,2"/>
<rect x="84.5" y="477.5" width="606" height="157" fill="none" stroke="#7A7A7A"/>
<rect x="80" y="477" width="1" height="158" fill="#7A7A7A" />
<rect x="84" y="638" width="607" height="1" fill="#7A7A7A" />
<rect x="78" y="624" width="2" height="1" fill="#7A7A7A" />
<text x="75.6" y="628.6999999999999" font-size="12" fill="#404040" text-anchor="end" textLength="32" lengthAdjust="spacingAndGlyphs" >1.500</text>
<rect x="78" y="588" width="2" height="1" fill="#7A7A7A" />
<text x="75.6" y="592.6999999999999" font-size="12" fill="#404040" text-anchor="end" textLength="32" lengthAdjust="spacingAndGlyphs" >1.525</text>
<rect x="78" y="553" width="2" height="1" fill="#7A7A7A" />
<text x="75.6" y="557.6999999999999" font-size="12" fill="#404040" text-anchor="end" textLength="32" lengthAdjust="spacingAndGlyphs" >1.550</text>
<rect x="78" y="518" width="2" height="1" fill="#7A7A7A" />
<text x="75.6" y="522.6999999999999" font-size="12" fill="#404040" text-anchor="end" textLength="32" lengthAdjust="spacingAndGlyphs" >1.575</text>
<rect x="78" y="482" width="2" height="1" fill="#7A7A7A" />
<text x="75.6" y="486.7" font-size="12" fill="#404040" text-anchor="end" textLength="32" lengthAdjust="spacingAndGlyphs" >1.600</text>
<rect x="84" y="639" width="1" height="2" fill="#7A7A7A" />
<text x="84.5" y="654" font-size="12" fill="#404040" text-anchor="middle" textLength="7" lengthAdjust="spacingAndGlyphs" >0</text>
<rect x="140" y="639" width="1" height="2" fill="#7A7A7A" />
<text x="140.5" y="654" font-size="12" fill="#404040" text-anchor="middle" textLength="14" lengthAdjust="spacingAndGlyphs" >10</text>
<rect x="196" y="639" width="1" height="2" fill="#7A7A7A" />
<text x="196.5" y="654" font-size="12" fill="#404040" text-anchor="middle" textLength="14" lengthAdjust="spacingAndGlyphs" >20</text>
<rect x="252" y="639" width="1" height="2" fill="#7A7A7A" />
<text x="252.5" y="654" font-size="12" fill="#404040" text-anchor="middle" textLength="14" lengthAdjust="spacingAndGlyphs" >30</text>
<rect x="308" y="639" width="1" height="2" fill="#7A7A7A" />
<text x="308.5" y="654" font-size="12" fill="#404040" text-anchor="middle" textLength="14" lengthAdjust="spacingAndGlyphs" >40</text>
<rect x="364" y="639" width="1" height="2" fill="#7A7A7A" />
<text x="364.5" y="654" font-size="12" fill="#404040" text-anchor="middle" textLength="14" lengthAdjust="spacingAndGlyphs" >50</text>
<rect x="420" y="639" width="1" height="2" fill="#7A7A7A" />
<text x="420.5" y="654" font-size="12" fill="#404040" text-anchor="middle" textLength="14" lengthAdjust="spacingAndGlyphs" >60</text>
<rect x="476" y="639" width="1" height="2" fill="#7A7A7A" />
<text x="476.5" y="654" font-size="12" fill="#404040" text-anchor="middle" textLength="14" lengthAdjust="spacingAndGlyphs" >70</text>
<rect x="532" y="639" width="1" height="2" fill="#7A7A7A" />
<text x="532.5" y="654" font-size="12" fill="#404040" text-anchor="middle" textLength="14" lengthAdjust="spacingAndGlyphs" >80</text>
<rect x="588" y="639" width="1" height="2" fill="#7A7A7A" />
<text x="588.5" y="654" font-size="12" fill="#404040" text-anchor="middle" textLength="14" lengthAdjust="spacingAndGlyphs" >90</text>
<rect x="644" y="639" width="1" height="2" fill="#7A7A7A" />
<text x="644.5" y="654" font-size="12" fill="#404040" text-anchor="middle" textLength="21" lengthAdjust="spacingAndGlyphs" >100</text>
<text x="0" y="0" font-size="14" font-weight="bold" fill="#404040" text-anchor="middle" textLength="124" lengthAdjust="spacingAndGlyphs" transform="translate(35.2 555.35) rotate(-90)">Temperatura [ºC]</text>
<text x="342.2" y="674" font-size="14" font-weight="bold" fill="#404040" text-anchor="start" textLength="89.8" lengthAdjust="spacingAndGlyphs" >Tempo [min]</text>
<rect x="203.5" y="685.5" width="306" height="21" fill="#FFFFFF" stroke="#000000"/>
<rect x="207.0" y="695" width="15.0" height="1" fill="#FF5555" />
<text x="225.5" y="700.8" font-size="12" fill="#404040" text-anchor="start" textLength="35.6" lengthAdjust="spacingAndGlyphs" >Ciclo 1</text>
<rect x="267.9" y="695" width="15.0" height="1" fill="#5555FF" />
<text x="286.4" y="700.8" font-size="12" fill="#404040" text-anchor="start" textLength="35.6" lengthAdjust="spacingAndGlyphs" >Ciclo 2</text>
<rect x="328.8" y="695" width="15.0" height="1" fill="#55FF55" />
<text x="347.3" y="700.8" font-size="12" fill="#404040" text-anchor="start" textLength="35.6" lengthAdjust="spacingAndGlyphs" >Ciclo 3</text>
<rect x="389.7" y="695" width="15.0" height="1" fill="#FFFF55" />
<text x="408.2" y="700.8" font-size="12" fill="#404040" text-anchor="start" textLength="35.6" lengthAdjust="spacingAndGlyphs" >Ciclo 4</text>
<rect x="450.6" y="695" width="15.0" height="1" fill="#FF55FF" />
<text x="469.1" y="700.8" font-size="12" fill="#404040" text-anchor="start" textLength="35.6" lengthAdjust="spacingAndGlyphs" >Ciclo 5</text>
<g clip-path="url(#pc2)">
<polyline points="96.50,483.80 101.20,484.39 107.64,485.19 115.29,486.15 123.64,487.21 132.15,488.31 140.30,489.40 148.09,490.51 155.96,491.68 163.98,492.90 172.27,494.14 180.91,495.38 190.00,496.60 199.97,497.82 210.81,499.07 222.01,500.33 233.04,501.55 243.38,502.72 252.50,503.80 260.42,504.82 267.56,505.81 274.00,506.74 279.83,507.59 285.14,508.35 290.00,509.00 293.75,509.44 296.19,509.66 298.09,509.78 300.26,509.93 303.47,510.23 308.50,510.80 316.02,511.71 325.52,512.90 336.06,514.22 346.70,515.58 356.50,516.85 364.50,517.90 370.46,518.72 375.08,519.39 378.85,519.97 382.27,520.51 385.82,521.07 390.00,521.70 394.49,522.35 398.82,522.96 403.29,523.59 408.18,524.29 413.79,525.11 420.40,526.10 428.76,527.38 438.77,528.91 449.51,530.57 460.00,532.22 469.32,533.71 476.50,534.90 480.88,535.70 483.09,536.19 484.11,536.52 484.94,536.85 486.57,537.32 490.00,538.10 495.54,539.22 502.47,540.59 510.19,542.09 518.14,543.66 525.74,545.19 532.40,546.60 538.11,547.86 543.33,549.05 548.19,550.21 552.84,551.37 557.39,552.59 562.00,553.90 566.59,555.30 571.03,556.74 575.39,558.23 579.72,559.79 584.07,561.41 588.50,563.10 593.07,564.89 597.74,566.77 602.44,568.72 607.07,570.71 611.55,572.71 615.80,574.70 619.88,576.70 623.87,578.73 627.71,580.77 631.33,582.81 634.69,584.82 637.70,586.80 640.27,588.68 642.44,590.48 644.33,592.26 646.07,594.07 647.82,596.00 649.70,598.10 651.83,600.58 654.11,603.44 656.40,606.41 658.52,609.21 660.31,611.60 661.60,613.30" fill="none" stroke="#FF55FF" stroke-width="1.1" stroke-linejoin="round" shape-rendering="crispEdges"/>
<polyline points="96.50,483.90 101.20,484.49 107.64,485.29 115.29,486.25 123.64,487.31 132.15,488.41 140.30,489.50 148.09,490.61 155.96,491.78 163.98,493.00 172.27,494.24 180.91,495.48 190.00,496.70 199.97,497.92 210.81,499.17 222.01,500.42 233.04,501.65 243.38,502.82 252.50,503.90 260.42,504.92 267.56,505.91 274.00,506.84 279.83,507.69 285.14,508.45 290.00,509.10 293.75,509.54 296.19,509.76 298.09,509.88 300.26,510.03 303.47,510.33 308.50,510.90 316.02,511.81 325.52,513.00 336.06,514.32 346.70,515.68 356.50,516.95 364.50,518.00 370.46,518.82 375.08,519.49 378.85,520.07 382.27,520.61 385.82,521.17 390.00,521.80 394.49,522.45 398.82,523.06 403.29,523.69 408.18,524.39 413.79,525.21 420.40,526.20 428.76,527.48 438.77,529.01 449.51,530.68 460.00,532.32 469.32,533.81 476.50,535.00 480.88,535.80 483.09,536.29 484.11,536.62 484.94,536.95 486.57,537.42 490.00,538.20 495.54,539.32 502.47,540.69 510.19,542.19 518.14,543.76 525.74,545.29 532.40,546.70 538.11,547.96 543.33,549.15 548.19,550.31 552.84,551.47 557.39,552.69 562.00,554.00 566.59,555.40 571.03,556.84 575.39,558.33 579.72,559.89 584.07,561.51 588.50,563.20 593.07,564.99 597.74,566.87 602.44,568.82 607.07,570.81 611.55,572.81 615.80,574.80 619.88,576.80 623.87,578.83 627.71,580.87 631.33,582.91 634.69,584.92 637.70,586.90 640.27,588.78 642.44,590.58 644.33,592.36 646.07,594.17 647.82,596.10 649.70,598.20 651.83,600.68 654.11,603.54 656.40,606.51 658.52,609.31 660.31,611.70 661.60,613.40" fill="none" stroke="#FFFF55" stroke-width="1.1" stroke-linejoin="round" shape-rendering="crispEdges"/>
<polyline points="96.50,484.00 101.20,484.59 107.64,485.39 115.29,486.35 123.64,487.41 132.15,488.51 140.30,489.60 148.09,490.71 155.96,491.88 163.98,493.10 172.27,494.34 180.91,495.58 190.00,496.80 199.97,498.02 210.81,499.27 222.01,500.52 233.04,501.75 243.38,502.92 252.50,504.00 260.42,505.02 267.56,506.01 274.00,506.94 279.83,507.79 285.14,508.55 290.00,509.20 293.75,509.64 296.19,509.86 298.09,509.98 300.26,510.13 303.47,510.43 308.50,511.00 316.02,511.91 325.52,513.10 336.06,514.43 346.70,515.78 356.50,517.05 364.50,518.10 370.46,518.92 375.08,519.59 378.85,520.17 382.27,520.71 385.82,521.27 390.00,521.90 394.49,522.55 398.82,523.16 403.29,523.79 408.18,524.49 413.79,525.31 420.40,526.30 428.76,527.58 438.77,529.11 449.51,530.77 460.00,532.42 469.32,533.91 476.50,535.10 480.88,535.90 483.09,536.39 484.11,536.72 484.94,537.05 486.57,537.52 490.00,538.30 495.54,539.42 502.47,540.79 510.19,542.29 518.14,543.86 525.74,545.39 532.40,546.80 538.11,548.06 543.33,549.25 548.19,550.41 552.84,551.57 557.39,552.79 562.00,554.10 566.59,555.50 571.03,556.94 575.39,558.43 579.72,559.99 584.07,561.61 588.50,563.30 593.07,565.09 597.74,566.97 602.44,568.92 607.07,570.91 611.55,572.91 615.80,574.90 619.88,576.90 623.87,578.93 627.71,580.97 631.33,583.01 634.69,585.02 637.70,587.00 640.27,588.88 642.44,590.68 644.33,592.46 646.07,594.27 647.82,596.20 649.70,598.30 651.83,600.78 654.11,603.64 656.40,606.61 658.52,609.41 660.31,611.80 661.60,613.50" fill="none" stroke="#55FF55" stroke-width="1.1" stroke-linejoin="round" shape-rendering="crispEdges"/>
<polyline points="96.50,484.20 101.20,484.85 107.64,485.74 115.29,486.80 123.64,487.96 132.15,489.15 140.30,490.30 148.74,491.51 158.04,492.84 167.49,494.21 176.43,495.51 184.16,496.64 190.00,497.50 193.36,498.02 194.66,498.26 194.75,498.34 194.49,498.35 194.72,498.40 196.30,498.60 199.19,498.93 202.72,499.31 206.74,499.74 211.11,500.20 215.71,500.69 220.40,501.20 225.22,501.73 230.31,502.29 235.61,502.88 241.10,503.50 246.74,504.17 252.50,504.90 258.66,505.74 265.30,506.71 272.10,507.72 278.71,508.71 284.79,509.59 290.00,510.30 293.75,510.73 296.19,510.94 298.09,511.04 300.26,511.17 303.47,511.45 308.50,512.00 316.02,512.91 325.52,514.08 336.06,515.41 346.70,516.76 356.50,518.03 364.50,519.10 370.46,519.94 375.08,520.65 378.85,521.27 382.27,521.85 385.82,522.45 390.00,523.10 394.49,523.76 398.82,524.37 403.29,524.99 408.18,525.69 413.79,526.50 420.40,527.50 428.76,528.79 438.77,530.36 449.51,532.04 460.00,533.71 469.32,535.21 476.50,536.40 480.88,537.16 483.09,537.59 484.11,537.86 484.94,538.12 486.57,538.54 490.00,539.30 495.54,540.44 502.47,541.85 510.19,543.42 518.14,545.05 525.74,546.65 532.40,548.10 538.11,549.39 543.33,550.60 548.19,551.77 552.84,552.94 557.39,554.17 562.00,555.50 566.59,556.91 571.03,558.37 575.39,559.89 579.72,561.46 584.07,563.09 588.50,564.80 593.07,566.59 597.74,568.47 602.44,570.41 607.07,572.39 611.55,574.39 615.80,576.40 619.88,578.43 623.87,580.49 627.71,582.57 631.33,584.67 634.69,586.75 637.70,588.80 640.27,590.78 642.44,592.69 644.33,594.59 646.07,596.54 647.82,598.59 649.70,600.80 651.83,603.38 654.11,606.34 656.40,609.40 658.52,612.29 660.31,614.75 661.60,616.50" fill="none" stroke="#5555FF" stroke-width="1.1" stroke-linejoin="round" shape-rendering="crispEdges"/>
<polyline points="96.50,484.30 101.20,485.00 107.64,485.95 115.29,487.08 123.64,488.33 132.15,489.63 140.30,490.90 148.74,492.27 158.04,493.81 167.49,495.39 176.43,496.90 184.16,498.21 190.00,499.20 192.98,499.73 193.47,499.87 192.74,499.81 192.11,499.73 192.86,499.84 196.30,500.30 203.00,501.19 212.03,502.37 222.45,503.72 233.30,505.13 243.64,506.50 252.50,507.70 260.05,508.79 267.09,509.86 273.61,510.88 279.60,511.81 285.07,512.63 290.00,513.30 293.75,513.70 296.19,513.84 298.09,513.86 300.26,513.91 303.47,514.14 308.50,514.70 316.02,515.67 325.52,516.96 336.06,518.42 346.70,519.92 356.50,521.33 364.50,522.50 370.46,523.42 375.08,524.18 378.85,524.85 382.27,525.47 385.82,526.11 390.00,526.80 394.49,527.48 398.82,528.09 403.29,528.71 408.18,529.42 413.79,530.29 420.40,531.40 428.76,532.90 438.77,534.76 449.51,536.78 460.00,538.77 469.32,540.54 476.50,541.90 481.16,542.76 483.97,543.26 485.60,543.54 486.71,543.74 487.95,543.98 490.00,544.40 492.73,544.98 495.60,545.61 498.60,546.28 501.75,547.00 505.05,547.78 508.50,548.60 512.10,549.46 515.86,550.36 519.76,551.31 523.81,552.33 528.02,553.42 532.40,554.60 537.04,555.91 541.96,557.34 547.04,558.84 552.15,560.39 557.18,561.92 562.00,563.40 566.59,564.79 571.03,566.11 575.39,567.42 579.72,568.78 584.07,570.26 588.50,571.90 593.32,573.90 598.55,576.23 603.81,578.68 608.69,581.01 612.82,582.99 615.80,584.40 637.70,598.30 649.70,610.70 661.60,626.40" fill="none" stroke="#FF5555" stroke-width="1.1" stroke-linejoin="round" shape-rendering="crispEdges"/>
</g>
<text x="733.0" y="120.7" font-size="12" font-weight="bold" fill="#333333" text-anchor="start" textLength="74.0" lengthAdjust="spacingAndGlyphs" >Peso de aço:</text>
<text x="933.8" y="120.7" font-size="12" font-weight="bold" fill="#333333" text-anchor="start" textLength="31.3" lengthAdjust="spacingAndGlyphs" >99.63</text>
<text x="988.0" y="120.7" font-size="12" font-weight="bold" fill="#333333" text-anchor="start" textLength="25.9" lengthAdjust="spacingAndGlyphs" >[ton]</text>
<text x="733.0" y="142.7" font-size="12" font-weight="bold" fill="#333333" text-anchor="start" textLength="180.0" lengthAdjust="spacingAndGlyphs" >Número de corridas simuladas:</text>
<text x="933.8" y="142.7" font-size="12" font-weight="bold" fill="#333333" text-anchor="start" >5</text>
<text x="733.0" y="164.7" font-size="12" font-weight="bold" fill="#333333" text-anchor="start" textLength="145.0" lengthAdjust="spacingAndGlyphs" >Tempo total de processo:</text>
<text x="933.8" y="164.7" font-size="12" font-weight="bold" fill="#333333" text-anchor="start" textLength="31.3" lengthAdjust="spacingAndGlyphs" >38.02</text>
<text x="988.0" y="164.7" font-size="12" font-weight="bold" fill="#333333" text-anchor="start" >[h]</text>
<text x="733.0" y="186.7" font-size="12" font-weight="bold" fill="#333333" text-anchor="start" textLength="137.0" lengthAdjust="spacingAndGlyphs" >Tempo de aquecimento:</text>
<text x="933.8" y="186.7" font-size="12" font-weight="bold" fill="#333333" text-anchor="start" >16.0</text>
<text x="988.0" y="186.7" font-size="12" font-weight="bold" fill="#333333" text-anchor="start" >[h]</text>
<text x="733.0" y="208.7" font-size="12" font-weight="bold" fill="#333333" text-anchor="start" textLength="134.2" lengthAdjust="spacingAndGlyphs" >Tempo de forno panela:</text>
<text x="933.8" y="208.7" font-size="12" font-weight="bold" fill="#333333" text-anchor="start" >1.00</text>
<text x="988.0" y="208.7" font-size="12" font-weight="bold" fill="#333333" text-anchor="start" >[h]</text>
<text x="733.0" y="230.7" font-size="12" font-weight="bold" fill="#333333" text-anchor="start" textLength="157.0" lengthAdjust="spacingAndGlyphs" >Tempo de desgaseificação:</text>
<text x="933.8" y="230.7" font-size="12" font-weight="bold" fill="#333333" text-anchor="start" >0.42</text>
<text x="988.0" y="230.7" font-size="12" font-weight="bold" fill="#333333" text-anchor="start" >[h]</text>
<text x="733.0" y="252.7" font-size="12" font-weight="bold" fill="#333333" text-anchor="start" textLength="117.0" lengthAdjust="spacingAndGlyphs" >Tempo de rinsagem:</text>
<text x="933.8" y="252.7" font-size="12" font-weight="bold" fill="#333333" text-anchor="start" >0.17</text>
<text x="988.0" y="252.7" font-size="12" font-weight="bold" fill="#333333" text-anchor="start" >[h]</text>
<text x="733.0" y="274.7" font-size="12" font-weight="bold" fill="#333333" text-anchor="start" textLength="91.2" lengthAdjust="spacingAndGlyphs" >Tempo na torre:</text>
<text x="933.8" y="274.7" font-size="12" font-weight="bold" fill="#333333" text-anchor="start" >1.15</text>
<text x="988.0" y="274.7" font-size="12" font-weight="bold" fill="#333333" text-anchor="start" >[h]</text>
<rect x="836.5" y="326.5" width="133" height="25" fill="url(#btg)" stroke="#7A8A99"/>
<text x="852.5" y="343.8" font-size="12" font-weight="bold" fill="#333333" text-anchor="start" textLength="100.2" lengthAdjust="spacingAndGlyphs" >Obter Resultados</text>
<circle cx="1067" cy="748" r="6.8" fill="none" stroke="#D4D6DA" stroke-width="2.6"/>
<rect x="0" y="0" width="1" height="754" fill="#1883D7" /></svg></body></html>
